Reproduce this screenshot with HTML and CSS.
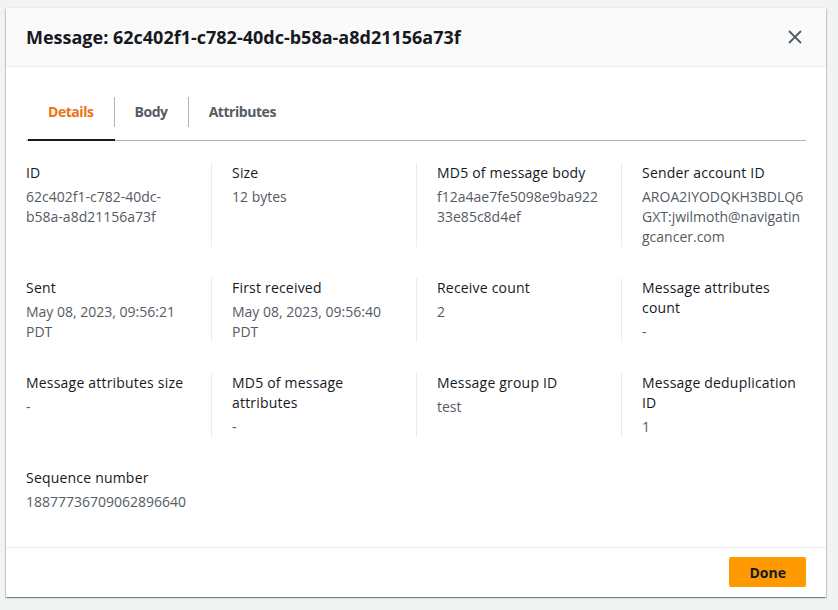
FILE: index.html
```html
<!DOCTYPE html>
<html lang="en">
<head>
<meta charset="utf-8">
<title>Message</title>
<link rel="stylesheet" href="styles.css">
</head>
<body>
<div class="modal">
  <div class="modal-header">
    <h2 class="modal-title">Message: 62c402f1-c782-40dc-b58a-a8d21156a73f</h2>
    <button class="close" aria-label="Close">
      <svg width="16" height="16" viewBox="0 0 16 16"><path d="M2 2l12 12M14 2L2 14" fill="none" stroke="#545b64" stroke-width="1.8"/></svg>
    </button>
  </div>
  <div class="modal-body">
    <div class="tabs">
      <div class="tab active"><span class="tab-label">Details</span></div>
      <div class="tab"><span class="tab-label">Body</span></div>
      <div class="tab"><span class="tab-label last">Attributes</span></div>
    </div>
    <div class="kv-grid">
      <div class="kv"><div class="k">ID</div><div class="v">62c402f1-c782-40dc-b58a-a8d21156a73f</div></div>
      <div class="kv"><div class="k">Size</div><div class="v">12 bytes</div></div>
      <div class="kv"><div class="k">MD5 of message body</div><div class="v">f12a4ae7fe5098e9ba92233e85c8d4ef</div></div>
      <div class="kv"><div class="k">Sender account ID</div><div class="v">AROA2IYODQKH3BDLQ6GXT:jwilmoth@navigatingcancer.com</div></div>

      <div class="kv"><div class="k">Sent</div><div class="v">May 08, 2023, 09:56:21 PDT</div></div>
      <div class="kv"><div class="k">First received</div><div class="v">May 08, 2023, 09:56:40 PDT</div></div>
      <div class="kv"><div class="k">Receive count</div><div class="v">2</div></div>
      <div class="kv"><div class="k">Message attributes count</div><div class="v">-</div></div>

      <div class="kv"><div class="k">Message attributes size</div><div class="v">-</div></div>
      <div class="kv"><div class="k">MD5 of message attributes</div><div class="v">-</div></div>
      <div class="kv"><div class="k">Message group ID</div><div class="v">test</div></div>
      <div class="kv"><div class="k">Message deduplication ID</div><div class="v">1</div></div>

      <div class="kv"><div class="k">Sequence number</div><div class="v">18877736709062896640</div></div>
    </div>
  </div>
  <div class="modal-footer">
    <button class="btn-primary">Done</button>
  </div>
</div>
</body>
</html>
```
FILE: styles.css
```css
* { box-sizing: border-box; }
html, body { margin: 0; padding: 0; }
body {
  background: #f2f3f3;
  font-family: "Open Sans", "Noto Sans", Arial, sans-serif;
  color: #16191f;
  width: 838px;
  height: 610px;
  overflow: hidden;
}
.modal {
  margin: 8px 0 0 6px;
  width: 820px;
  height: 589px;
  background: #fff;
  display: flex;
  flex-direction: column;
  box-shadow: 0 1px 1px 0 rgba(0,28,36,.3), 1px 1px 1px 0 rgba(0,28,36,.15), -1px 1px 1px 0 rgba(0,28,36,.15), 0 -1px 0 0 #eaeded;
}
.modal-header {
  height: 59px;
  flex: none;
  background: #fafafa;
  border-bottom: 1px solid #eaeded;
  display: flex;
  align-items: center;
  justify-content: space-between;
  padding: 0 20px 1px 20px;
}
.modal-title {
  margin: 0;
  font-size: 18px;
  font-weight: 700;
  line-height: 22px;
  color: #16191f;
}
.close {
  border: 0;
  background: none;
  padding: 0;
  width: 16px;
  height: 16px;
  margin-right: 3px;
  display: flex;
}
.modal-body {
  flex: 1;
  padding: 30px 20px 0 20px;
}
.tabs {
  display: flex;
  border-bottom: 1px solid #aab7b8;
  padding-left: 2px;
}
.tab {
  padding-bottom: 12px;
  border-bottom: 2px solid transparent;
  margin-bottom: -1px;
}
.tab.active { border-bottom-color: #16191f; }
.tab-label {
  display: block;
  padding: 5px 20px;
  line-height: 20px;
  font-size: 14px;
  font-weight: 700;
  letter-spacing: -0.45px;
  color: #545b64;
  border-right: 1px solid #aab7b8;
}
.tab-label.last { border-right: 0; }
.tab.active .tab-label { color: #ec7211; }
.kv-grid {
  margin: 22px -20px 0;
  display: grid;
  grid-template-columns: repeat(4, 205px);
  row-gap: 31px;
}
.kv {
  padding: 0 20px;
  font-size: 14px;
  line-height: 20px;
}
.kv:not(:nth-child(4n+1)) { border-left: 1px solid #eaeded; }
.k { color: #16191f; margin-bottom: 4px; letter-spacing: 0.2px; }
.v { color: #545b64; overflow-wrap: anywhere; }
.modal-footer {
  flex: none;
  border-top: 1px solid #eaeded;
  padding: 9px 20px 10px;
  display: flex;
  justify-content: flex-end;
}
.btn-primary {
  background: #ff9900;
  border: 0;
  border-radius: 2px;
  height: 30px;
  padding: 0 20px;
  font-family: inherit;
  font-size: 14px;
  font-weight: 700;
  color: #16191f;
}
```
